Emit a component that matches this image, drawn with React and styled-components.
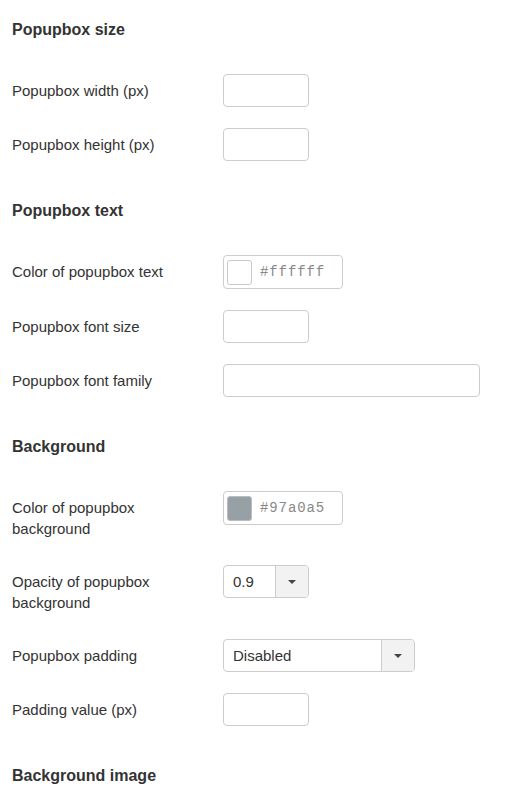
import React from "react";
import styled, { createGlobalStyle } from "styled-components";

const Global = createGlobalStyle`
  html, body { margin: 0; padding: 0; background: #fff; }
  body { font-family: "Liberation Sans", Arial, sans-serif; color: #333; }
`;

const Page = styled.div`
  padding: 1px 12px 0 12px;
  width: 513px;
  box-sizing: border-box;
`;

const Section = styled.section`
  display: flex;
  flex-direction: column;
`;

const Heading = styled.h3`
  margin: 0 0 33px 0;
  padding-top: 18px;
  font-size: 16px;
  line-height: 22px;
  font-weight: bold;
  color: #333;
`;

const Row = styled.div`
  display: grid;
  grid-template-columns: 211px 1fr;
  align-items: start;
  margin-bottom: 21px;
`;

const Label = styled.label`
  padding: 6px 20px 5px 0;
  font-size: 15px;
  line-height: 21px;
  color: #333;
`;

const TextInput = styled.div`
  box-sizing: border-box;
  width: ${(p) => p.$w || 86}px;
  height: 33px;
  border: 1px solid #ccc;
  border-radius: 4px;
  background: #fff;
`;

const ColorBox = styled.div`
  box-sizing: border-box;
  width: 120px;
  height: 34px;
  border: 1px solid #ccc;
  border-radius: 4px;
  background: #fff;
  display: flex;
  align-items: center;
  padding-left: 3px;
  gap: 8px;
`;

const Swatch = styled.span`
  box-sizing: border-box;
  width: 25px;
  height: 25px;
  border-radius: 3px;
  border: 1px solid ${(p) => (p.$c === "#ffffff" ? "#c8c8c8" : "#b8bec2")};
  background: ${(p) => p.$c};
`;

const Hex = styled.span`
  font-family: "Liberation Mono", "Courier New", monospace;
  font-size: 14px;
  letter-spacing: 0.9px;
  color: #888;
  line-height: 20px;
`;

const SelectBox = styled.div`
  box-sizing: border-box;
  width: ${(p) => p.$w}px;
  height: 33px;
  border: 1px solid #ccc;
  border-radius: 4px;
  display: flex;
  overflow: hidden;
  background: #fff;
`;

const SelectValue = styled.span`
  flex: 1;
  padding-left: 9px;
  font-size: 15px;
  line-height: 31px;
  color: #333;
`;

const Toggle = styled.span`
  width: 32px;
  border-left: 1px solid #ccc;
  background: #f2f2f2;
  display: flex;
  align-items: center;
  justify-content: center;
`;

const Caret = styled.span`
  width: 0;
  height: 0;
  border-left: 4px solid transparent;
  border-right: 4px solid transparent;
  border-top: 4px solid #444;
`;

const Field = ({ label, children }) => (
  <Row>
    <Label>{label}</Label>
    <div>{children}</div>
  </Row>
);

const Select = ({ w, value }) => (
  <SelectBox $w={w}>
    <SelectValue>{value}</SelectValue>
    <Toggle>
      <Caret />
    </Toggle>
  </SelectBox>
);

const Color = ({ value }) => (
  <ColorBox>
    <Swatch $c={value} />
    <Hex>{value}</Hex>
  </ColorBox>
);

export default function App() {
  return (
    <Page>
      <Global />
      <Section>
        <Heading>Popupbox size</Heading>
        <Field label="Popupbox width (px)"><TextInput /></Field>
        <Field label="Popupbox height (px)"><TextInput /></Field>
      </Section>
      <Section>
        <Heading>Popupbox text</Heading>
        <Field label="Color of popupbox text"><Color value="#ffffff" /></Field>
        <Field label="Popupbox font size"><TextInput /></Field>
        <Field label="Popupbox font family"><TextInput $w={257} /></Field>
      </Section>
      <Section>
        <Heading>Background</Heading>
        <Field label="Color of popupbox background"><Color value="#97a0a5" /></Field>
        <Field label="Opacity of popupbox background"><Select w={86} value="0.9" /></Field>
        <Field label="Popupbox padding"><Select w={192} value="Disabled" /></Field>
        <Field label="Padding value (px)"><TextInput /></Field>
      </Section>
      <Section>
        <Heading>Background image</Heading>
      </Section>
    </Page>
  );
}
